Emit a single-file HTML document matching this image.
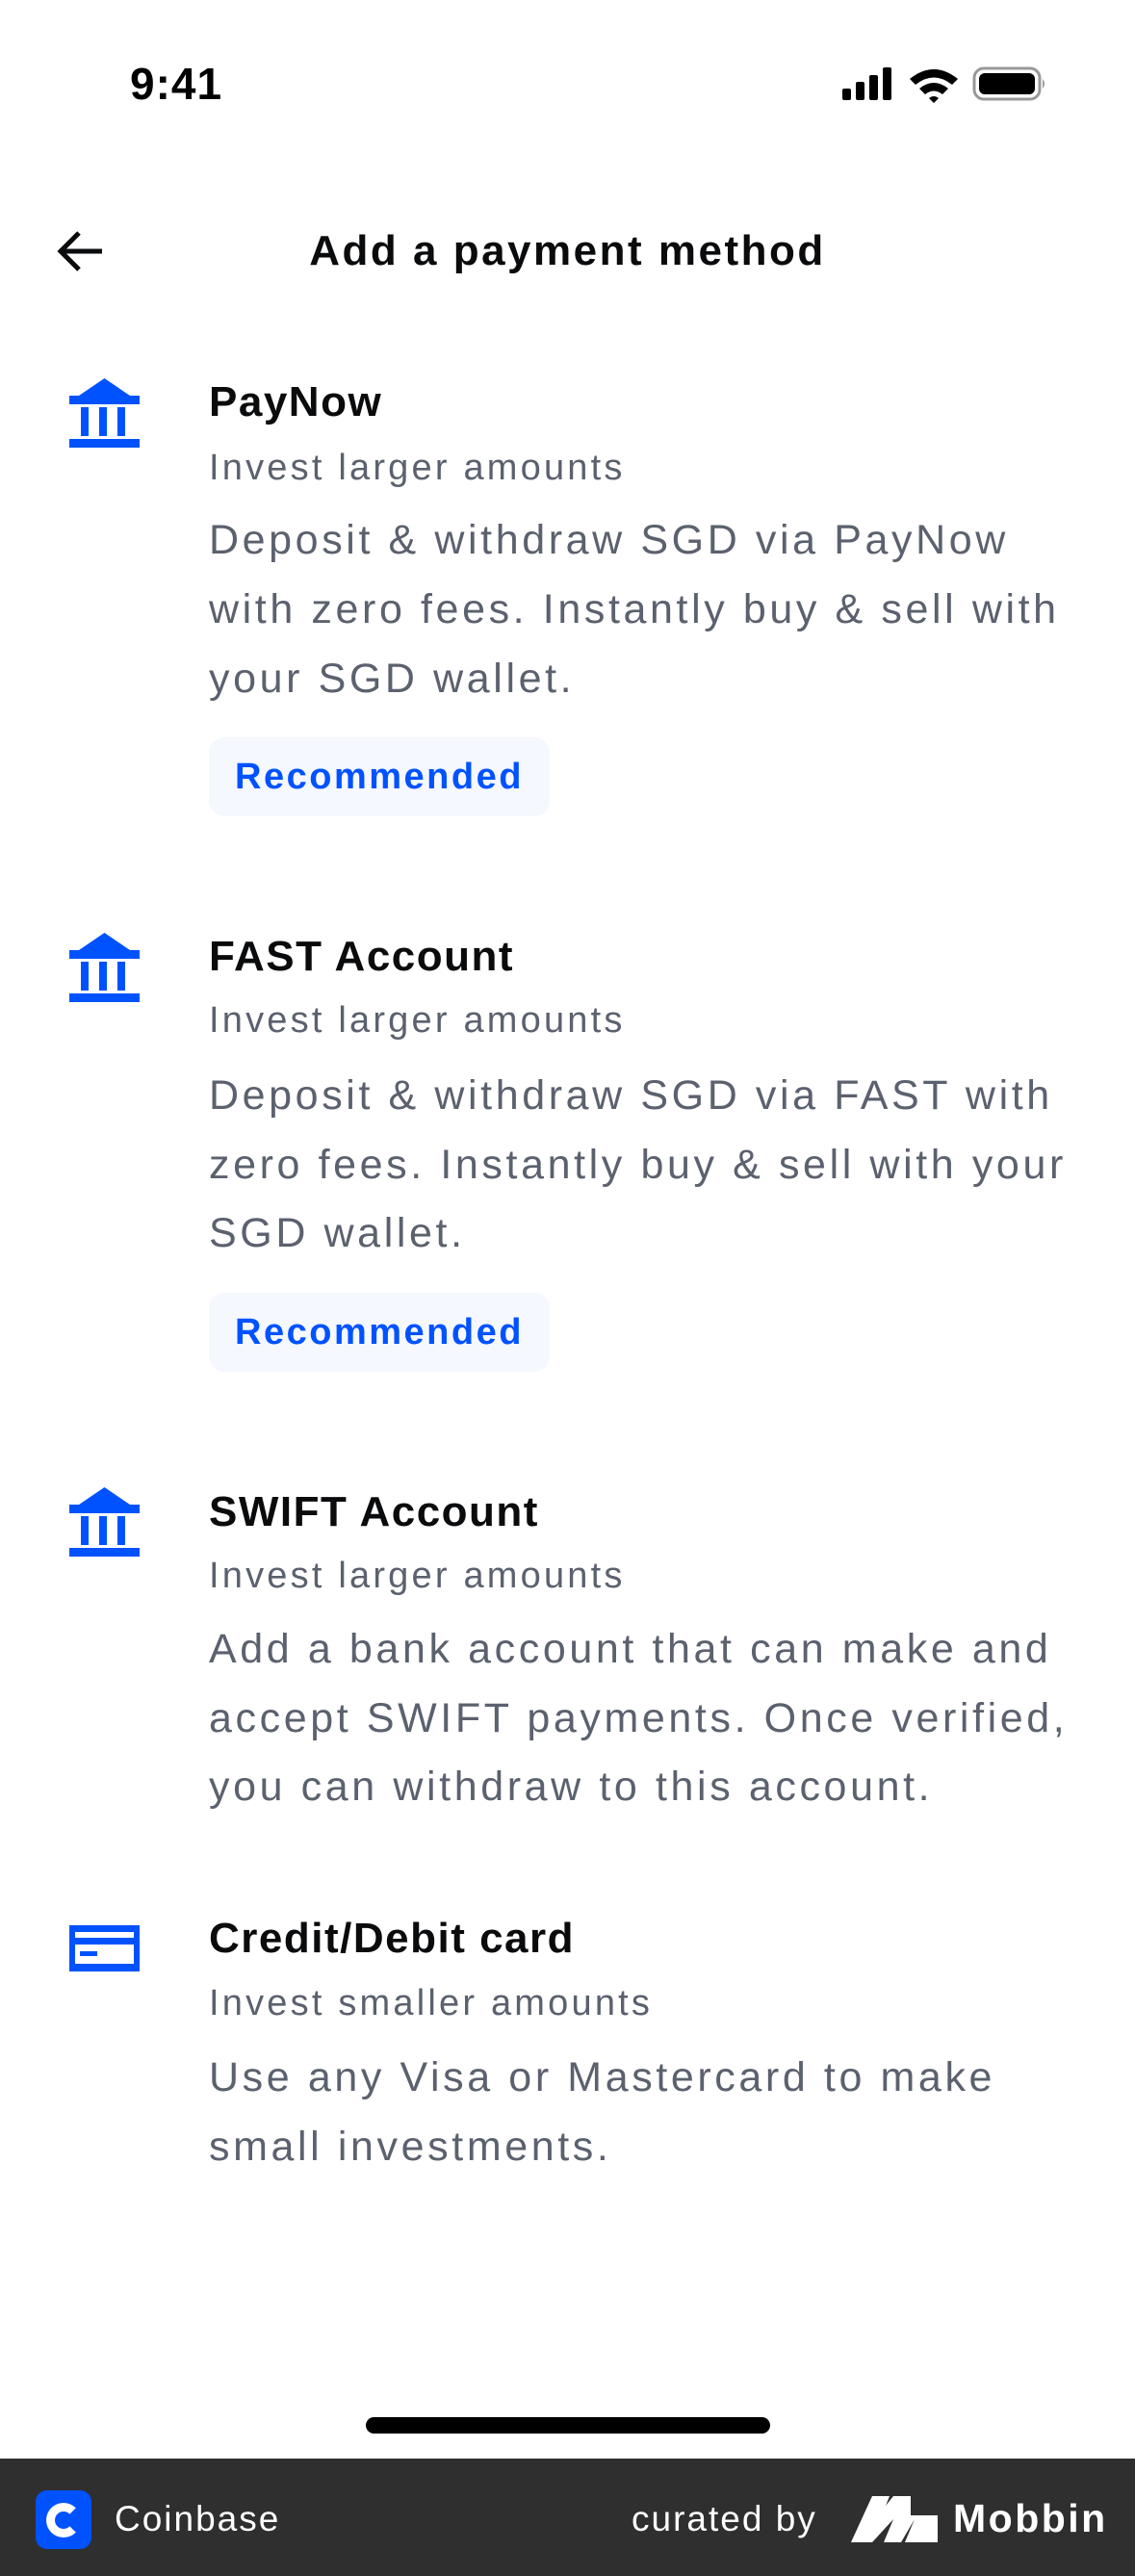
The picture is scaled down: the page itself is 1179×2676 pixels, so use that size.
<!DOCTYPE html>
<html><head><meta charset="utf-8"><style>
*{margin:0;padding:0;box-sizing:border-box}
body{width:1179px;height:2676px;background:#fff;position:relative;overflow:hidden;font-family:"Liberation Sans",sans-serif}
.t{position:absolute;white-space:nowrap;line-height:1}
.h{font-size:44px;color:#0a0b0d;font-weight:bold;left:217px;letter-spacing:1.5px}
.s{font-size:38px;color:#5b616e;left:217px;letter-spacing:3.2px}
.d{font-size:43px;color:#5b616e;left:217px;letter-spacing:3.6px}
.pill{position:absolute;left:217px;width:354px;height:82px;background:#f5f8ff;border-radius:16px;color:#0052ff;font-weight:bold;font-size:38px;line-height:82px;text-align:center;letter-spacing:2.5px}
.ic{position:absolute;left:72px}
</style></head><body>
<div class="t" style="left:135px;top:64px;font-size:46px;font-weight:bold;color:#000;letter-spacing:1px">9:41</div>
<svg style="position:absolute;left:873px;top:68px" width="216" height="40" viewBox="0 0 216 40">
<rect x="2" y="24" width="9" height="12" rx="2"/><rect x="16" y="17" width="9" height="19" rx="2"/><rect x="30" y="10" width="9" height="26" rx="2"/><rect x="44" y="2" width="9" height="34" rx="2"/>
<path d="M72 14 Q97 -6 122 14 L116 20 Q97 5 78 20Z M82 24 Q97 12 112 24 L106 30 Q97 23 88 30Z M92 34 L97 39 L102 34 Q97 30 92 34Z"/>
<rect x="139" y="3" width="68" height="32" rx="10" fill="none" stroke="#999" stroke-width="3"/><rect x="144" y="8" width="58" height="22" rx="6"/><path d="M210 14 Q214 19 210 24Z" fill="#999"/>
</svg>
<svg style="position:absolute;left:58px;top:238px" width="52" height="46" viewBox="0 0 52 46"><path d="M48 23H6M24 4L5 23L24 42" fill="none" stroke="#0a0b0d" stroke-width="5"/></svg>
<div class="t" style="left:0;width:1179px;text-align:center;top:239px;font-size:44px;font-weight:bold;color:#0a0b0d;letter-spacing:2.5px">Add a payment method</div>

<svg class="ic" style="top:393px" width="73" height="72" viewBox="0 0 73 72"><path d="M36.5 0L63 18H10Z M0 18H73V27H0Z M12 30H20V60H12Z M31 30H39V60H31Z M50 30H58V60H50Z M0 63H73V72H0Z" fill="#0052ff"/></svg>
<div class="t h" style="top:396px">PayNow</div>
<div class="t s" style="top:467px">Invest larger amounts</div>
<div class="t d" style="top:540px">Deposit &amp; withdraw SGD via PayNow</div>
<div class="t d" style="top:612px">with zero fees. Instantly buy &amp; sell with</div>
<div class="t d" style="top:684px">your SGD wallet.</div>
<div class="pill" style="top:766px">Recommended</div>

<svg class="ic" style="top:969px" width="73" height="72" viewBox="0 0 73 72"><path d="M36.5 0L63 18H10Z M0 18H73V27H0Z M12 30H20V60H12Z M31 30H39V60H31Z M50 30H58V60H50Z M0 63H73V72H0Z" fill="#0052ff"/></svg>
<div class="t h" style="top:972px">FAST Account</div>
<div class="t s" style="top:1041px">Invest larger amounts</div>
<div class="t d" style="top:1117px">Deposit &amp; withdraw SGD via FAST with</div>
<div class="t d" style="top:1189px">zero fees. Instantly buy &amp; sell with your</div>
<div class="t d" style="top:1260px">SGD wallet.</div>
<div class="pill" style="top:1343px">Recommended</div>

<svg class="ic" style="top:1545px" width="73" height="72" viewBox="0 0 73 72"><path d="M36.5 0L63 18H10Z M0 18H73V27H0Z M12 30H20V60H12Z M31 30H39V60H31Z M50 30H58V60H50Z M0 63H73V72H0Z" fill="#0052ff"/></svg>
<div class="t h" style="top:1549px">SWIFT Account</div>
<div class="t s" style="top:1618px">Invest larger amounts</div>
<div class="t d" style="top:1692px">Add a bank account that can make and</div>
<div class="t d" style="top:1764px">accept SWIFT payments. Once verified,</div>
<div class="t d" style="top:1835px">you can withdraw to this account.</div>

<svg class="ic" style="top:2000px" width="73" height="48" viewBox="0 0 73 48"><rect width="73" height="48" fill="#0052ff"/><rect x="6" y="7" width="61" height="6" fill="#fff"/><rect x="6" y="20" width="61" height="20" fill="#fff"/><rect x="11" y="27" width="18" height="5" fill="#0052ff"/></svg>
<div class="t h" style="top:1992px">Credit/Debit card</div>
<div class="t s" style="top:2062px">Invest smaller amounts</div>
<div class="t d" style="top:2137px">Use any Visa or Mastercard to make</div>
<div class="t d" style="top:2209px">small investments.</div>

<div style="position:absolute;left:380px;top:2511px;width:420px;height:17px;border-radius:9px;background:#000"></div>
<div style="position:absolute;left:0;top:2554px;width:1179px;height:122px;background:#2f2f2f"></div>
<div style="position:absolute;left:37px;top:2587px;width:58px;height:61px;border-radius:12px;background:#0052ff"></div>
<div style="position:absolute;left:48px;top:2600px;width:36px;height:36px;border-radius:50%;border:9px solid #fff;border-right-color:transparent"></div>
<div class="t" style="left:119px;top:2598px;font-size:37px;color:#fff;letter-spacing:2px">Coinbase</div>
<div class="t" style="left:656px;top:2598px;font-size:37px;color:#fff;letter-spacing:2px">curated by</div>
<svg style="position:absolute;left:884px;top:2593px" width="90" height="48" viewBox="0 0 90 48"><path d="M0 48L22 0H40L36 10L44 0H62V20H90V48H56L66 24L52 48H34L44 24L22 48Z" fill="#fff"/></svg>
<div class="t" style="left:990px;top:2596px;font-size:41px;font-weight:bold;color:#fff;letter-spacing:2.5px">Mobbin</div>
</body></html>
